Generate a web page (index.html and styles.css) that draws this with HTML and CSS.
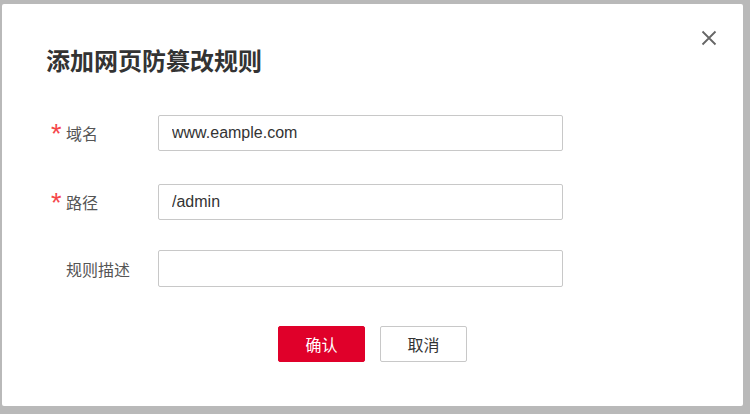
FILE: index.html
```html
<!DOCTYPE html>
<html lang="zh-CN">
<head>
    <meta charset="UTF-8">
    <meta name="viewport" content="width=device-width, initial-scale=1.0">
    <title>添加网页防篡改规则</title>
    <link rel="stylesheet" href="styles.css">
</head>
<body>
<div class="mask">
    <div class="dialog">
        <button class="close-btn" type="button" aria-label="关闭">
            <svg width="16" height="16" viewBox="0 0 16 16">
                <path d="M1.5 1.5 L14.5 14.5 M14.5 1.5 L1.5 14.5" stroke="#666" stroke-width="1.8" fill="none"/>
            </svg>
        </button>
        <h2 class="dialog-title">添加网页防篡改规则</h2>

        <form class="rule-form">
            <div class="form-row row-first">
                <label class="form-label" for="domain"><span class="star">*</span>域名</label>
                <input class="form-input" type="text" id="domain" value="www.eample.com">
            </div>
            <div class="form-row row-second">
                <label class="form-label" for="path"><span class="star">*</span>路径</label>
                <input class="form-input" type="text" id="path" value="/admin">
            </div>
            <div class="form-row">
                <label class="form-label" for="desc"><span class="star"></span>规则描述</label>
                <input class="form-input input-tall" type="text" id="desc">
            </div>

            <div class="form-actions">
                <button class="btn btn-primary" type="submit">确认</button>
                <button class="btn btn-default" type="button">取消</button>
            </div>
        </form>
    </div>
</div>
</body>
</html>
```

FILE: styles.css
```css
body{
    margin: 0;
    padding: 0;
    font-family: "Liberation Sans", "Noto Sans CJK SC", sans-serif;
    background-color: #b9b9b9;
}
.mask{
    width: 750px;
    height: 414px;
    padding: 4px 7px 8px 2px;
    box-sizing: border-box;
}
.dialog{
    position: relative;
    height: 402px;
    background-color: #fff;
    border-radius: 2px;
    padding: 40px 0 0 44px;
    box-sizing: border-box;
}
.close-btn{
    position: absolute;
    top: 26px;
    right: 26px;
    width: 16px;
    height: 16px;
    padding: 0;
    border: none;
    background: none;
    cursor: pointer;
}
.close-btn svg{
    display: block;
}
.dialog-title{
    margin: 0 0 39px 0;
    font-size: 24px;
    line-height: 32px;
    font-weight: bold;
    color: #333;
    font-family: "Noto Sans CJK SC", sans-serif;
}
.form-row{
    display: flex;
    align-items: center;
    margin-bottom: 30px;
}
.row-first{
    margin-bottom: 33px;
}
.form-label{
    width: 112px;
    display: flex;
    align-items: center;
    font-size: 16px;
    color: #555;
    font-family: "Noto Sans CJK SC", sans-serif;
}
.star{
    width: 20px;
    padding-left: 5px;
    box-sizing: border-box;
    color: #f5474a;
    font-size: 27px;
    line-height: 16px;
    height: 16px;
    padding-top: 1px;
    font-family: "Liberation Sans", sans-serif;
}
.form-input{
    width: 405px;
    height: 36px;
    box-sizing: border-box;
    border: 1px solid #c8c8c8;
    border-radius: 2px;
    padding: 0 13px;
    font-size: 16px;
    color: #333;
    font-family: "Liberation Sans", sans-serif;
    outline: none;
}
.input-tall{
    height: 37px;
}
.form-actions{
    display: flex;
    justify-content: center;
    gap: 15px;
    margin-top: 39px;
    margin-left: -44px;
}
.btn{
    width: 87px;
    height: 36px;
    border-radius: 2px;
    font-size: 16px;
    font-family: "Noto Sans CJK SC", sans-serif;
    cursor: pointer;
}
.btn-primary{
    background-color: #e0002a;
    border: 1px solid #e0002a;
    color: #fff;
}
.btn-default{
    background-color: #fff;
    border: 1px solid #c8c8c8;
    color: #333;
}
```
